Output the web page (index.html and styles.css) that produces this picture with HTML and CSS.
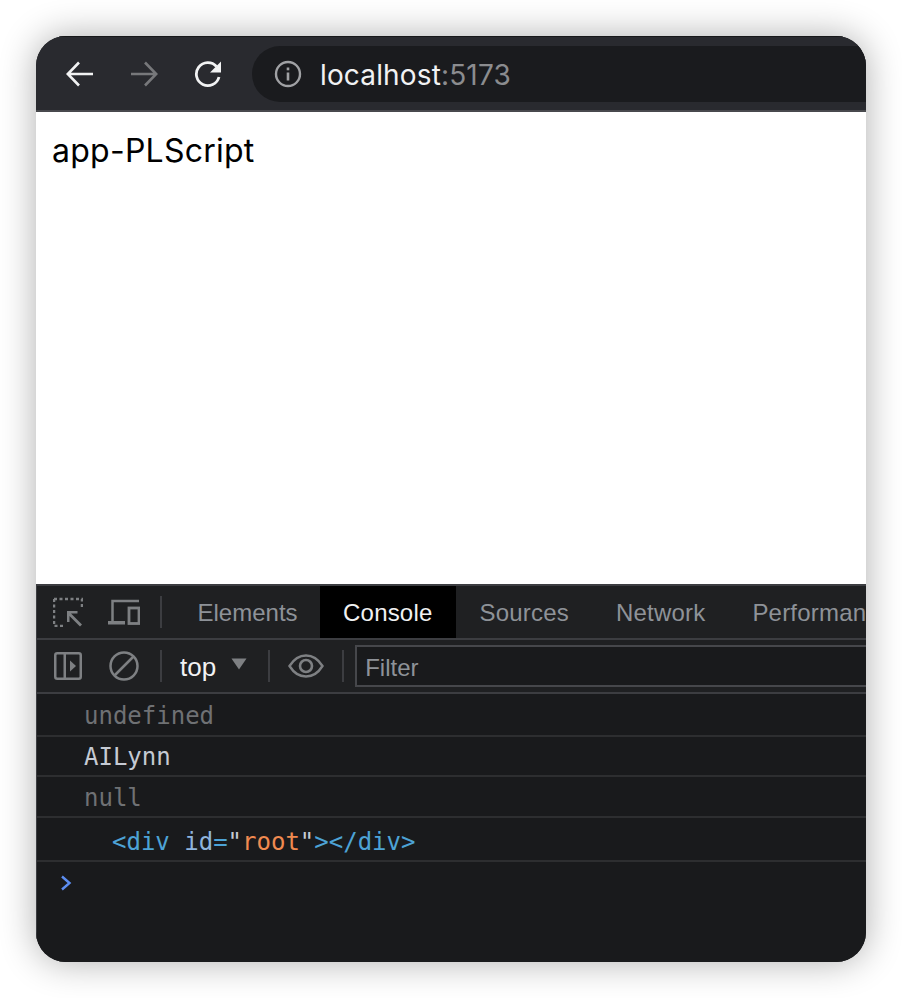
FILE: index.html
```html
<!DOCTYPE html>
<html lang="en">
<head>
<meta charset="utf-8">
<title>app-PLScript</title>
<link rel="stylesheet" href="styles.css">
</head>
<body>
<div class="window">
  <header class="toolbar">
    <svg class="nav nav-back" width="28" height="28" viewBox="0 0 28 28"><path d="M27 14H2M13 2.500L1.800 14 13 25.500" fill="none" stroke="#f1f2f3" stroke-width="2.600"/></svg>
    <svg class="nav nav-forward" width="28" height="28" viewBox="0 0 28 28"><path d="M1 14H26M15 2.500L26.200 14 15 25.500" fill="none" stroke="#77787b" stroke-width="2.600"/></svg>
    <svg class="nav nav-reload" width="28" height="28" viewBox="0 0 28 28"><path d="M22.500 6.500A11.500 11.500 0 1 0 25 17" fill="none" stroke="#f1f2f3" stroke-width="2.800"/><path d="M27 1.500V12.500H16Z" fill="#f1f2f3"/></svg>
    <div class="omnibox">
      <svg class="info" width="28" height="28" viewBox="0 0 28 28"><circle cx="14" cy="14" r="12" fill="none" stroke="#a0a1a4" stroke-width="2.400"/><rect x="12.700" y="7.500" width="2.600" height="2.800" fill="#a0a1a4"/><rect x="12.700" y="12.500" width="2.600" height="8" fill="#a0a1a4"/></svg>
      <span class="host">localhost</span><span class="port">:5173</span>
    </div>
  </header>
  <main class="page">app-PLScript</main>
  <section class="devtools">
    <div class="tabbar">
      <svg class="dt-inspect" width="30" height="30" viewBox="0 0 30 30"><path d="M1 2H29V11M1 2V29H10" fill="none" stroke="#7e8083" stroke-width="2.500" stroke-dasharray="3 2.500"/><path d="M14 14H24.500V16.500H18L29 27.500 27 29.500 16.500 19V25H14Z" fill="#7e8083"/></svg>
      <svg class="dt-device" width="32" height="26" viewBox="0 0 32 26"><path d="M4.500 23V2H31" fill="none" stroke="#7e8083" stroke-width="2.500"/><rect x="0" y="22" width="17" height="3.500" fill="#7e8083"/><rect x="21" y="9" width="10" height="15.500" fill="none" stroke="#7e8083" stroke-width="2.800"/></svg>
      <span class="vline vline-tabs"></span>
      <nav class="tabs">
        <span class="tab tab-first">Elements</span>
        <span class="tab tab-active">Console</span>
        <span class="tab">Sources</span>
        <span class="tab">Network</span>
        <span class="tab">Performance</span>
      </nav>
    </div>
    <div class="filterbar">
      <svg class="dt-sidebar" width="28" height="28" viewBox="0 0 28 28"><rect x="1.250" y="1.250" width="25.500" height="25.500" rx="2" fill="none" stroke="#7e8083" stroke-width="2.500"/><rect x="9.500" y="1" width="2.500" height="26" fill="#7e8083"/><path d="M16 8.500L22 14 16 19.500Z" fill="#7e8083"/></svg>
      <svg class="dt-clear" width="30" height="30" viewBox="0 0 30 30"><circle cx="15" cy="15" r="13.500" fill="none" stroke="#7e8083" stroke-width="2.500"/><path d="M24.500 5.500L5.500 24.500" stroke="#7e8083" stroke-width="2.500"/></svg>
      <span class="vline vline-a"></span>
      <span class="context">top</span>
      <svg class="caret" width="16" height="12" viewBox="0 0 16 12"><path d="M0.500 0.500H15.500L8 11.500Z" fill="#7e8083"/></svg>
      <span class="vline vline-b"></span>
      <svg class="dt-eye" width="36" height="24" viewBox="0 0 36 24"><path d="M1.500 12C6 4.800 11.500 1.500 18 1.500S30 4.800 34.500 12C30 19.200 24.500 22.500 18 22.500S6 19.200 1.500 12Z" fill="none" stroke="#7e8083" stroke-width="2.400"/><circle cx="18" cy="12" r="6" fill="none" stroke="#7e8083" stroke-width="2.600"/></svg>
      <span class="vline vline-c"></span>
      <div class="filter">Filter</div>
    </div>
    <div class="log">
      <div class="row row-1 muted">undefined</div>
      <div class="row row-2 plain">AILynn</div>
      <div class="row row-3 muted">null</div>
      <div class="row row-4"><span class="tagc">&lt;div</span> <span class="attr">id</span><span class="tagc">=</span><span class="plain">"</span><span class="val">root</span><span class="plain">"</span><span class="tagc">&gt;&lt;/div&gt;</span></div>
      <div class="prompt"><svg width="12" height="16" viewBox="0 0 12 16"><path d="M2 1.500L9.500 8 2 14.500" fill="none" stroke="#5c8df0" stroke-width="2.400"/></svg></div>
    </div>
  </section>
</div>
</body>
</html>
```
FILE: styles.css
```css
* { box-sizing: border-box; }
html, body { margin: 0; height: 100%; background: #fff; overflow: hidden; }
body { padding: 36px; font-family: "Liberation Sans", Arial, sans-serif; }
.window {
  width: 830px; height: 926px;
  border-radius: 30px; overflow: hidden;
  display: flex; flex-direction: column;
  box-shadow: 0 0 36px rgba(0,0,0,.32);
  background: #191a1c;
}
.toolbar {
  height: 76px; flex: none;
  background: #292a2f;
  border-top: 1px solid #17181a;
  border-bottom: 2px solid #48494d;
  display: flex; align-items: center;
  padding-left: 30px;
}
.nav { flex: none; }
.nav-forward { margin-left: 36px; }
.nav-reload { margin-left: 36px; }
.omnibox {
  flex: 1; height: 56px; margin-left: 30px;
  background: #1a1b1e;
  border-radius: 28px 0 0 28px;
  display: flex; align-items: center;
  padding-left: 22px;
  font-family: Inter, "Liberation Sans", sans-serif;
  font-size: 28px;
  letter-spacing: .15px;
}
.info { margin-right: 18px; flex: none; }
.host { color: #f1f2f3; padding-top: 2px; }
.port { color: #8b8c8f; padding-top: 2px; }
.page {
  height: 472px; flex: none;
  background: #fff; color: #000;
  padding: 20px 16px;
  font-family: Inter, "Liberation Sans", sans-serif;
  font-size: 32px; line-height: 38px;
  letter-spacing: .25px;
}
.devtools { flex: 1; min-height: 0; background: #191a1c; border-left: 1px solid #3c3d41; display: flex; flex-direction: column; }
.tabbar {
  height: 56px; flex: none;
  border-top: 2px solid #3c3d41;
  border-bottom: 2px solid #3c3d41;
  background: #1f2022;
  display: flex; align-items: center;
  padding-left: 16px;
}
.dt-inspect { flex: none; }
.dt-device { margin-left: 25px; flex: none; }
.vline { width: 2px; height: 32px; background: #3c3d41; flex: none; }
.vline-tabs { margin-left: 20px; }
.tabs { display: flex; height: 100%; margin-left: 12px; white-space: nowrap; font-size: 24px; line-height: 52px; color: #8e9298; letter-spacing: .2px; }
.tab { padding: 1px 23.500px 0; }
.tab-first { padding-right: 22px; letter-spacing: 0; }
.tab-active { background: #000; color: #f1f2f3; }
.filterbar {
  height: 54px; flex: none;
  background: #1f2022;
  border-bottom: 2px solid #3c3d41;
  display: flex; align-items: center;
  padding-left: 17px;
}
.dt-sidebar { flex: none; }
.dt-clear { margin-left: 27px; flex: none; }
.vline-a { margin-left: 21px; }
.context { margin-left: 18px; font-size: 26px; line-height: 30px; padding-top: 2px; color: #f1f2f3; }
.caret { margin-left: 15px; flex: none; margin-top: -4px; }
.vline-b { margin-left: 21px; }
.dt-eye { margin-left: 18px; flex: none; }
.vline-c { margin-left: 18px; }
.filter {
  flex: 1; margin-left: 11px; height: 42px;
  border: 2px solid #46474b; border-right: 0;
  background: #191a1c;
  color: #8e9298; font-size: 24px;
  padding-left: 8px;
  line-height: 42px;
}
.log { font-family: "DejaVu Sans Mono", monospace; font-size: 24px; }
.row { padding-left: 47px; border-bottom: 2px solid #2d2e30; white-space: nowrap; }
.row-1 { height: 43px; line-height: 44px; }
.row-2 { height: 40px; line-height: 40px; }
.row-3 { height: 41px; line-height: 42px; }
.row-4 { height: 44px; line-height: 48px; padding-left: 75px; }
.muted { color: #6f7174; }
.plain { color: #c5cad3; }
.tagc { color: #4da3d6; }
.attr { color: #8fb4dd; }
.val { color: #f08a50; }
.prompt { padding: 13px 0 0 23px; }
.prompt svg { display: block; }
```
